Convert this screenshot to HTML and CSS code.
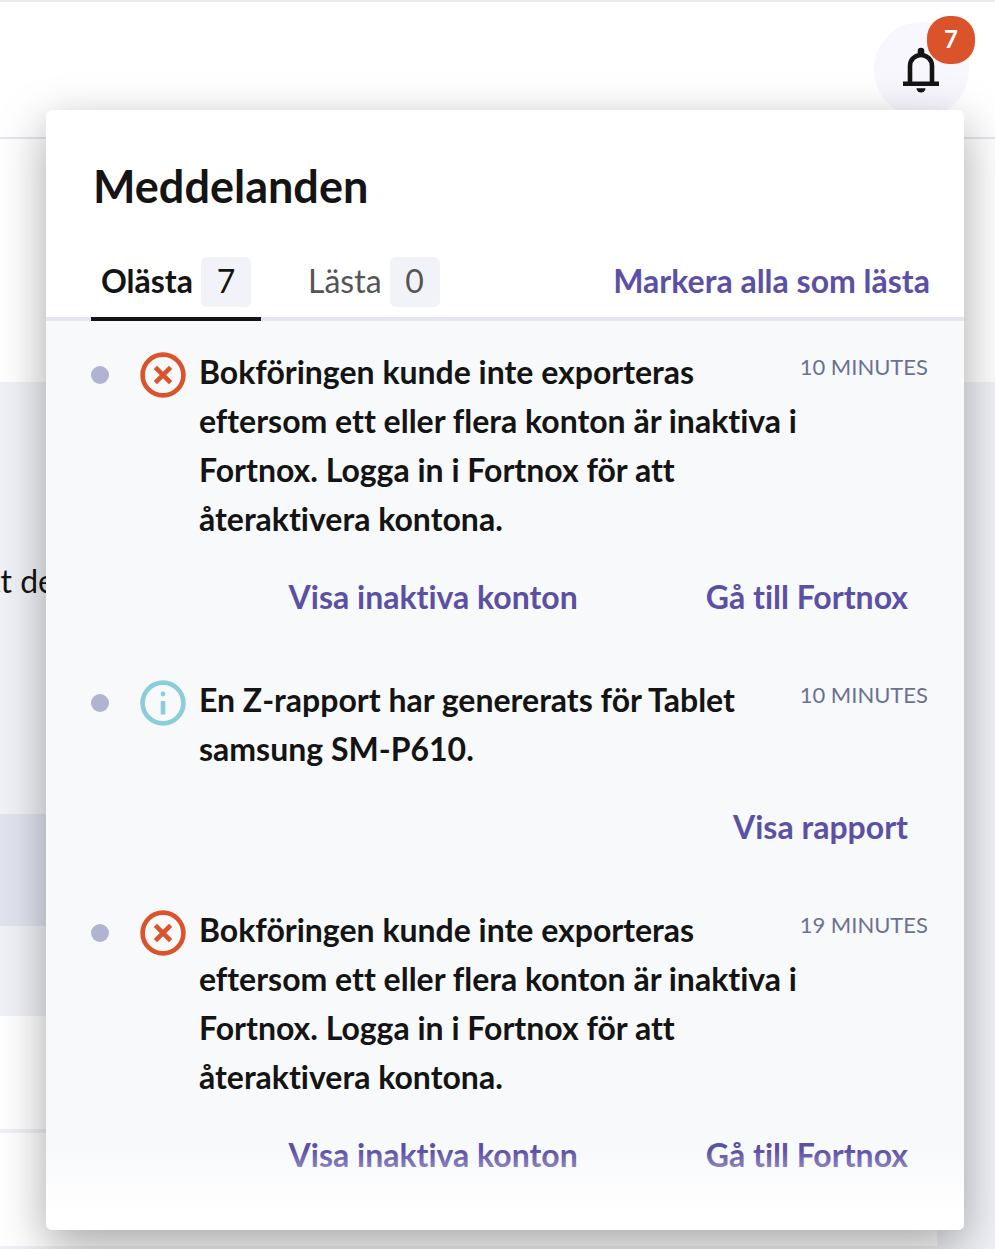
FILE: index.html
```html
<!DOCTYPE html>
<html lang="sv">
<head>
    <meta charset="UTF-8">
    <meta name="viewport" content="width=device-width, initial-scale=1.0">
    <title>Meddelanden</title>
    <link rel="stylesheet" href="styles.css">
</head>
<body>
    <header class="topbar">
        <button class="bell" type="button" aria-label="Meddelanden">
            <svg width="37" height="46" viewBox="0 0 37 46" aria-hidden="true">
                <path d="M7 35V19a11 11 0 0 1 22 0v16" fill="none" stroke="#141414" stroke-width="4.6"/>
                <path d="M14.7 9V4a3.3 3.3 0 0 1 6.6 0v5z" fill="#141414"/>
                <path d="M0 34.5h36v4.6H0z" fill="#141414"/>
                <path d="M13.5 41.3h9a4.5 4.3 0 0 1-9 0z" fill="#141414"/>
            </svg>
            <span class="bell-count">7</span>
        </button>
    </header>

    <main class="page">
        <div class="page-top"></div>
        <p class="page-text">tt de</p>
        <div class="page-band"></div>
        <div class="page-gap"></div>
        <div class="page-card"></div>
        <div class="page-card"></div>
    </main>

    <section class="popover">
        <h1>Meddelanden</h1>
        <div class="tabs">
            <button class="tab active" type="button">Olästa <span class="count">7</span></button>
            <button class="tab" type="button">Lästa <span class="count">0</span></button>
            <button class="mark-all" type="button">Markera alla som lästa</button>
        </div>

        <ul class="messages">
            <li class="message">
                <span class="dot"></span>
                <svg class="icon error" viewBox="0 0 46 46" aria-hidden="true">
                    <circle cx="23" cy="23" r="20.4"/>
                    <path d="M15.4 15.4l15.2 15.2M30.6 15.4L15.4 30.6"/>
                </svg>
                <p class="text">Bokföringen kunde inte exporteras eftersom ett eller flera konton är inaktiva i Fortnox. Logga in i Fortnox för att återaktivera kontona.</p>
                <time>10 MINUTES</time>
                <div class="actions">
                    <a href="#">Visa inaktiva konton</a>
                    <a href="#">Gå till Fortnox</a>
                </div>
            </li>
            <li class="message">
                <span class="dot"></span>
                <svg class="icon info" viewBox="0 0 46 46" aria-hidden="true">
                    <circle cx="23" cy="23" r="20.4"/>
                    <path d="M23 21v13.5"/>
                    <circle class="fill" cx="23" cy="14" r="2.4"/>
                </svg>
                <p class="text">En Z-rapport har genererats för Tablet samsung SM-P610.</p>
                <time>10 MINUTES</time>
                <div class="actions">
                    <a href="#">Visa rapport</a>
                </div>
            </li>
            <li class="message">
                <span class="dot"></span>
                <svg class="icon error" viewBox="0 0 46 46" aria-hidden="true">
                    <circle cx="23" cy="23" r="20.4"/>
                    <path d="M15.4 15.4l15.2 15.2M30.6 15.4L15.4 30.6"/>
                </svg>
                <p class="text">Bokföringen kunde inte exporteras eftersom ett eller flera konton är inaktiva i Fortnox. Logga in i Fortnox för att återaktivera kontona.</p>
                <time>19 MINUTES</time>
                <div class="actions">
                    <a href="#">Visa inaktiva konton</a>
                    <a href="#">Gå till Fortnox</a>
                </div>
            </li>
        </ul>
    </section>
</body>
</html>
```
FILE: styles.css
```css
* {
    box-sizing: border-box;
}
body {
    margin: 0;
    height: 100vh;
    overflow: hidden;
    position: relative;
    display: flex;
    flex-direction: column;
    font-family: Lato, "Liberation Sans", sans-serif;
    font-size: 32px;
    font-variant-ligatures: none;
    line-height: 49px;
    color: #141414;
    background: #f1f2f7;
}
h1, p, ul {
    margin: 0;
    padding: 0;
}
button {
    font: inherit;
    font-variant-ligatures: none;
    color: inherit;
    border: none;
    background: none;
    padding: 0;
    cursor: pointer;
}

/* top bar */
.topbar {
    flex: none;
    display: flex;
    justify-content: flex-end;
    align-items: center;
    height: 139px;
    padding: 0 26px;
    background: #fff;
    border-top: 2px solid #ebebeb;
    border-bottom: 2px solid #e3e5f0;
}
.bell {
    position: relative;
    display: flex;
    align-items: center;
    justify-content: center;
    width: 95px;
    height: 95px;
    border-radius: 50%;
    background: #f8f7fe;
}
.bell-count {
    position: absolute;
    top: -6px;
    right: -6px;
    width: 48px;
    height: 48px;
    border-radius: 22px;
    background: #db532b;
    color: #fff;
    font-size: 24px;
    font-weight: 700;
    line-height: 46px;
}

/* page behind the popover */
.page {
    flex: 1;
}
.page-top {
    height: 243px;
    background: #fff;
}
.page-text {
    height: 432px;
    margin-left: -11px;
    padding-top: 174px;
}
.page-band {
    height: 112px;
    margin-right: 58px;
    background: #e2e5f0;
}
.page-gap {
    height: 90px;
}
.page-card {
    height: 117px;
    margin-right: 58px;
    background: #fff;
    border-bottom: 4px solid #f0f0f6;
}

/* popover */
.popover {
    position: absolute;
    top: 110px;
    right: 31px;
    bottom: 19px;
    left: 46px;
    display: flex;
    flex-direction: column;
    overflow: hidden;
    border-radius: 6px;
    background: #fff;
    box-shadow: 0 16px 48px rgba(0, 0, 0, 0.35);
}
.popover::after {
    content: "";
    position: absolute;
    right: 0;
    bottom: 0;
    left: 0;
    height: 80px;
    background: linear-gradient(rgba(255, 255, 255, 0), #fff 60px);
}
h1 {
    padding: 48px 47px 42px;
    font-size: 45px;
    line-height: 57px;
    font-weight: 700;
}
.tabs {
    display: flex;
    padding: 0 34px 0 45px;
    border-bottom: 4px solid #e3e5f0;
    line-height: 47px;
}
.tab {
    display: flex;
    gap: 8px;
    height: 64px;
    margin: 0 37px -4px 0;
    padding: 0 10px;
    border-bottom: 4px solid transparent;
    color: #555;
}
.tab.active {
    color: #141414;
    font-weight: 700;
    border-color: #141414;
}
.count {
    width: 50px;
    height: 50px;
    border-radius: 6px;
    background: #f2f3f8;
    font-weight: 400;
}
.mark-all {
    align-self: flex-start;
    margin-left: auto;
    color: #5c50a5;
    font-weight: 700;
}

.messages {
    flex: 1;
    overflow: hidden;
    list-style: none;
    background: #f8f9fb;
}
.message {
    display: grid;
    grid-template-columns: 49px 59px 1fr auto;
    align-items: start;
    padding: 26px 36px 28px 45px;
}
.dot {
    width: 18px;
    height: 18px;
    margin-top: 19px;
    border-radius: 50%;
    background: #b0b4d1;
}
.icon {
    width: 46px;
    height: 46px;
    margin-top: 5px;
    fill: none;
    stroke-width: 4.6;
}
.error {
    stroke: #db532b;
}
.info {
    stroke: #8bcdd8;
}
.info .fill {
    fill: #8bcdd8;
    stroke: none;
}
.text {
    font-weight: 700;
}
time {
    padding-top: 5px;
    font-size: 22px;
    line-height: 29px;
    color: #6b7291;
}
.actions {
    grid-column: 1 / -1;
    display: flex;
    justify-content: flex-end;
    gap: 128px;
    padding: 29px 20px 0 0;
}
.actions a {
    color: #5c50a5;
    font-weight: 700;
    text-decoration: none;
}
```
